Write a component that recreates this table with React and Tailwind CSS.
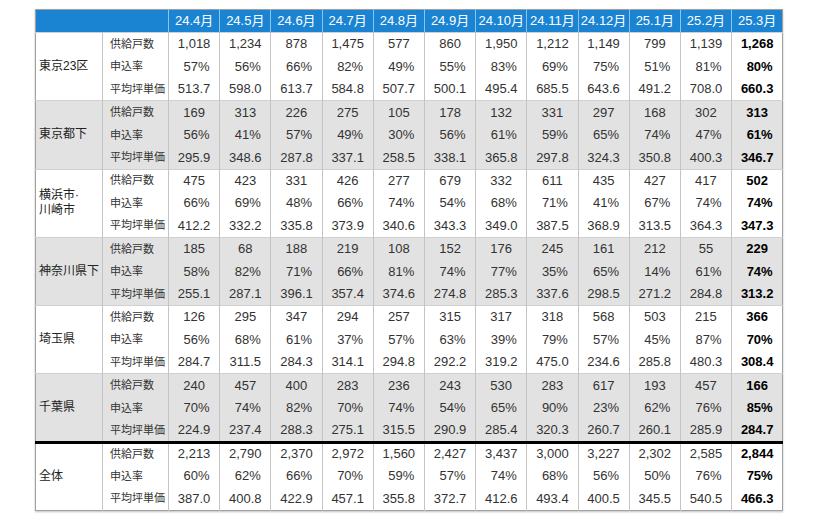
const months = ["24.4月", "24.5月", "24.6月", "24.7月", "24.8月", "24.9月", "24.10月", "24.11月", "24.12月", "25.1月", "25.2月", "25.3月"];

const labels = ["供給戸数", "申込率", "平均坪単価"];

const sections = [
  {
    name: ["東京23区"],
    gray: false,
    rows: [
      ["1,018", "1,234", "878", "1,475", "577", "860", "1,950", "1,212", "1,149", "799", "1,139", "1,268"],
      ["57%", "56%", "66%", "82%", "49%", "55%", "83%", "69%", "75%", "51%", "81%", "80%"],
      ["513.7", "598.0", "613.7", "584.8", "507.7", "500.1", "495.4", "685.5", "643.6", "491.2", "708.0", "660.3"],
    ],
  },
  {
    name: ["東京都下"],
    gray: true,
    rows: [
      ["169", "313", "226", "275", "105", "178", "132", "331", "297", "168", "302", "313"],
      ["56%", "41%", "57%", "49%", "30%", "56%", "61%", "59%", "65%", "74%", "47%", "61%"],
      ["295.9", "348.6", "287.8", "337.1", "258.5", "338.1", "365.8", "297.8", "324.3", "350.8", "400.3", "346.7"],
    ],
  },
  {
    name: ["横浜市·", "川崎市"],
    gray: false,
    rows: [
      ["475", "423", "331", "426", "277", "679", "332", "611", "435", "427", "417", "502"],
      ["66%", "69%", "48%", "66%", "74%", "54%", "68%", "71%", "41%", "67%", "74%", "74%"],
      ["412.2", "332.2", "335.8", "373.9", "340.6", "343.3", "349.0", "387.5", "368.9", "313.5", "364.3", "347.3"],
    ],
  },
  {
    name: ["神奈川県下"],
    gray: true,
    rows: [
      ["185", "68", "188", "219", "108", "152", "176", "245", "161", "212", "55", "229"],
      ["58%", "82%", "71%", "66%", "81%", "74%", "77%", "35%", "65%", "14%", "61%", "74%"],
      ["255.1", "287.1", "396.1", "357.4", "374.6", "274.8", "285.3", "337.6", "298.5", "271.2", "284.8", "313.2"],
    ],
  },
  {
    name: ["埼玉県"],
    gray: false,
    rows: [
      ["126", "295", "347", "294", "257", "315", "317", "318", "568", "503", "215", "366"],
      ["56%", "68%", "61%", "37%", "57%", "63%", "39%", "79%", "57%", "45%", "87%", "70%"],
      ["284.7", "311.5", "284.3", "314.1", "294.8", "292.2", "319.2", "475.0", "234.6", "285.8", "480.3", "308.4"],
    ],
  },
  {
    name: ["千葉県"],
    gray: true,
    rows: [
      ["240", "457", "400", "283", "236", "243", "530", "283", "617", "193", "457", "166"],
      ["70%", "74%", "82%", "70%", "74%", "54%", "65%", "90%", "23%", "62%", "76%", "85%"],
      ["224.9", "237.4", "288.3", "275.1", "315.5", "290.9", "285.4", "320.3", "260.7", "260.1", "285.9", "284.7"],
    ],
  },
  {
    name: ["全体"],
    gray: false,
    total: true,
    rows: [
      ["2,213", "2,790", "2,370", "2,972", "1,560", "2,427", "3,437", "3,000", "3,227", "2,302", "2,585", "2,844"],
      ["60%", "62%", "66%", "70%", "59%", "57%", "74%", "68%", "56%", "50%", "76%", "75%"],
      ["387.0", "400.8", "422.9", "457.1", "355.8", "372.7", "412.6", "493.4", "400.5", "345.5", "540.5", "466.3"],
    ],
  },
];

export default function App() {
  return (
    <div className="w-[830px] h-[515px] bg-white pt-[9px] pl-[35px] font-['Liberation_Sans','Noto_Sans_CJK_JP',sans-serif]">
      <table className="table-fixed border-collapse w-[747px] border border-[#a0a0a0] shadow-[0_1px_2px_rgba(0,0,0,0.25)]">
        <colgroup>
          <col className="w-[67px]" />
          <col className="w-[66px]" />
          {months.map((m) => (
            <col key={m} className="w-[51.2px]" />
          ))}
        </colgroup>
        <thead>
          <tr className="h-[23px] bg-[#1a84d3] text-white text-[13px]">
            <th colSpan={2} className="p-0"></th>
            {months.map((m) => (
              <th key={m} className="p-0 font-normal text-center border-l border-[#8ec3ea]">
                {m}
              </th>
            ))}
          </tr>
        </thead>
        <tbody>
          {sections.map((s, si) =>
            s.rows.map((row, ri) => (
              <tr
                key={si + "-" + ri}
                className={
                  "h-[22.75px] " +
                  (s.gray ? "bg-[#e2e2e2] " : "bg-white ") +
                  (ri === 0 ? (s.total ? "border-t-[3px] border-black" : "border-t border-[#d0d0d0]") : "")
                }
              >
                {ri === 0 && (
                  <td rowSpan={3} className="p-0 pl-[3px] text-[12px] leading-[15px] text-[#222] align-middle border-r border-[#c4c4c4]">
                    {s.name.map((n) => (
                      <div key={n}>{n}</div>
                    ))}
                  </td>
                )}
                <td className="p-0 pl-[7px] text-[11px] text-[#333] border-r border-[#c4c4c4]">{labels[ri]}</td>
                {row.map((v, ci) => (
                  <td
                    key={ci}
                    className={
                      "p-0 text-center text-[13px] border-l border-[#c4c4c4] " +
                      (ri === 1 ? "pl-[5px] " : "") +
                      (ci === 11 ? "font-bold text-black" : "text-[#333]")
                    }
                  >
                    {v}
                  </td>
                ))}
              </tr>
            ))
          )}
        </tbody>
      </table>
    </div>
  );
}
